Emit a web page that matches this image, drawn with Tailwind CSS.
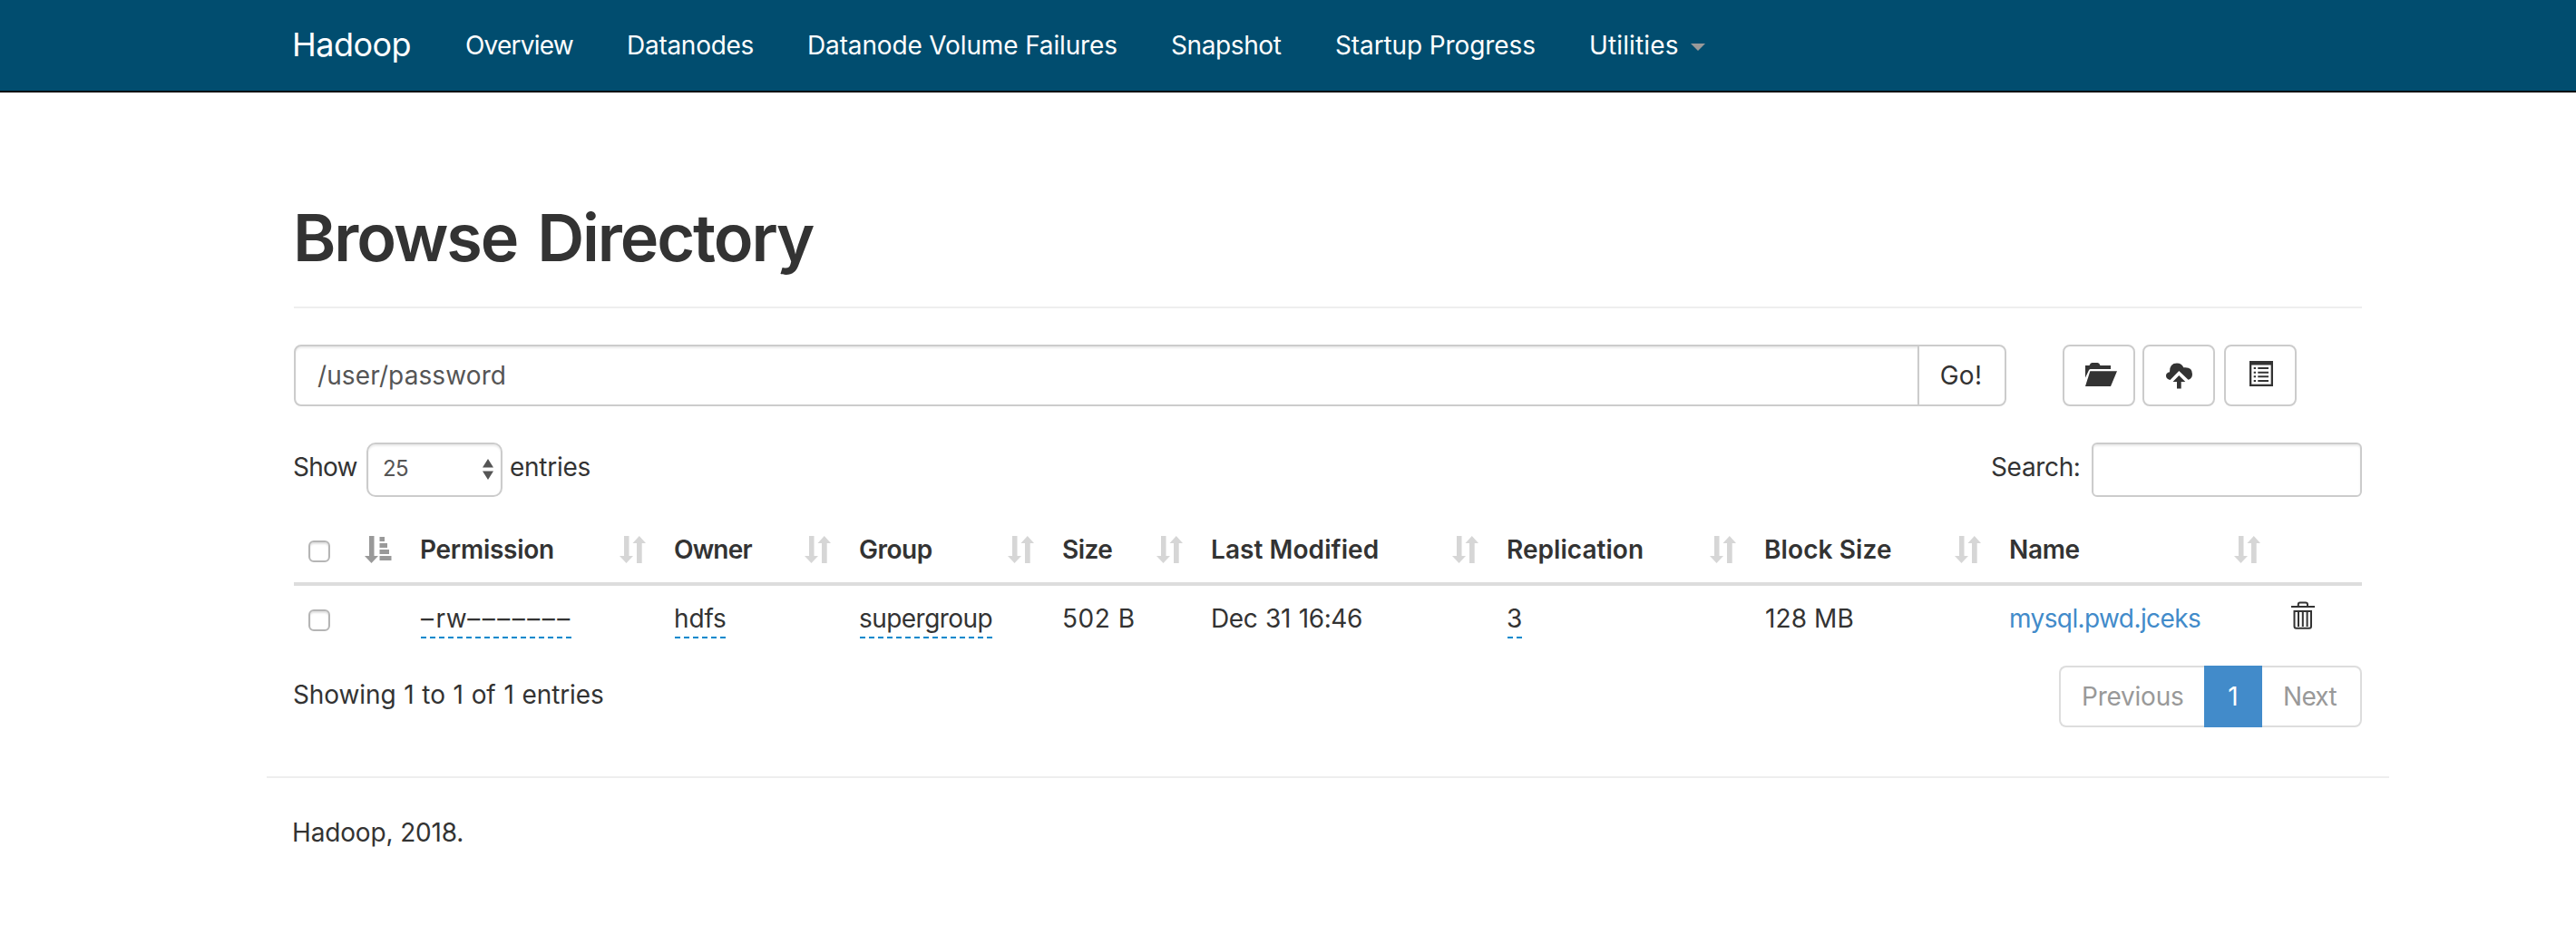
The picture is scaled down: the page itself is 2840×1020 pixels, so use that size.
<!DOCTYPE html>
<html lang="en">
<head>
    <meta charset="UTF-8">
    <meta name="viewport" content="width=device-width, initial-scale=1.0">
    <title>Browsing HDFS</title>
    <script src="https://cdn.jsdelivr.net/npm/@tailwindcss/browser@4"></script>
</head>
<body class="bg-white font-['Inter',sans-serif] text-[28px] leading-10 text-[#333]">
    <svg class="hidden">
        <symbol id="sort" viewBox="0 0 29 30">
            <path d="M5 0h5.5v22H15L7.5 30 0 22h5zM21.8 0 29 8h-4.3v22H19V8h-4.5z" fill="currentColor"/>
        </symbol>
    </svg>

    <header class="h-[102px] border-b-2 border-[#080808] bg-[#014d6f] pl-[322px] text-white">
        <nav class="flex h-[100px] items-center whitespace-nowrap">
            <a class="w-[191px] pb-0.5 text-[36px] tracking-[-0.52px]">Hadoop</a>
            <a class="w-[178px] tracking-[-0.79px]">Overview</a>
            <a class="w-[199px] tracking-[-0.27px]">Datanodes</a>
            <a class="w-[401px] tracking-[-0.14px]">Datanode Volume Failures</a>
            <a class="w-[181px] tracking-[-0.39px]">Snapshot</a>
            <a class="w-[280px] tracking-[-0.11px]">Startup Progress</a>
            <a class="flex items-center gap-[13px] tracking-[0.14px]">Utilities
                <svg class="mt-1 h-2 w-4 text-[#999]" viewBox="0 0 16 8"><path d="M0 0h16L8 8z" fill="currentColor"/></svg>
            </a>
        </nav>
    </header>

    <main class="ml-[294px] w-[2340px]">
        <div class="px-[30px]">
            <h1 class="mt-[120px] border-b-2 border-[#eee] pb-9 text-[72px] leading-[80px] font-semibold tracking-[-2.1px] [word-spacing:6px]"><span class="-ml-px">Browse Directory</span></h1>

            <div class="mt-10 flex h-[68px]">
                <div class="flex w-[1888px] rounded-lg border-2 border-[#ccc]">
                    <div class="flex flex-1 items-center rounded-l-md pl-6 tracking-[0.11px] text-[#555] shadow-[inset_0_2px_2px_rgba(0,0,0,0.075)]">/user/password</div>
                    <button class="w-[96px] border-l-2 border-[#ccc] pr-0.5 tracking-[0.31px]">Go!</button>
                </div>
                <button class="ml-[62px] flex w-20 items-start rounded-lg border-2 border-[#ccc] pt-[18px] pl-[23px]">
                    <svg class="h-[26px] w-9" viewBox="0 0 36 26" fill="#333">
                        <path d="M0 3h4.500Q5.500 0 7.500 0h6q2 0 3 3H28v4H5.500Q4.300 7 3.800 8.500L0 16.500z"/>
                        <path d="M5.300 9.300H35L28 26H0z"/>
                    </svg>
                </button>
                <button class="ml-2 flex w-20 items-start rounded-lg border-2 border-[#ccc] pt-[18px] pl-6">
                    <svg class="h-[29px] w-[29px]" viewBox="0 0 29 29" fill="#333">
                        <path d="M4.500 19Q0 18 0 14.300 0 11 4 10.200 3.800.500 12 .500 17.500.500 19.300 5.300 29 4.300 29 12.500 29 17.500 24.500 18.800L14.300 9z"/>
                        <path d="M14.300 14 21.300 21H16.700V28.500H12V21H7.500z"/>
                    </svg>
                </button>
                <button class="ml-2.5 flex w-20 items-start rounded-lg border-2 border-[#ccc] pt-4 pl-[26px]">
                    <svg class="h-7 w-[26px]" viewBox="0 0 26 28">
                        <path d="M0 0h26v28H0z" fill="#333"/>
                        <path d="M2.300 4.500h21.400v21.200H2.300z" fill="#fff"/>
                        <path d="M4.700 7H7v2H4.700zM9.300 7H21v2H9.300zM4.700 11.700H7v2H4.700zM9.300 11.700H21v2H9.300zM4.700 16.300H7v2H4.700zM9.300 16.300H21v2H9.300zM4.700 21H7v2H4.700zM9.300 21H21v2H9.300z" fill="#333"/>
                    </svg>
                </button>
            </div>

            <div class="mt-10 flex h-[60px]">
                <label class="-ml-px flex items-center">
                    <span class="w-[81px] pb-1.5 tracking-[-0.77px]">Show</span>
                    <span class="flex h-[60px] w-[150px] items-center justify-between rounded-[10px] border-2 border-[#ccc] pr-2 pb-0.5 pl-4 text-2xl tracking-[-0.64px] text-[#555] shadow-[inset_0_2px_2px_rgba(0,0,0,0.075)]">25
                        <svg class="h-[23px] w-3" viewBox="0 0 12 23" fill="#555"><path d="M6 0l6 9.500H0zM0 13.500h12L6 23z"/></svg>
                    </span>
                    <span class="ml-2 pb-1.5 tracking-[-0.27px]">entries</span>
                </label>
                <label class="ml-auto flex items-center">
                    <span class="w-[111px] pb-1.5 tracking-[-0.34px]">Search:</span>
                    <input type="text" class="h-[60px] w-[298px] rounded-md border-2 border-[#ccc] shadow-[inset_0_2px_2px_rgba(0,0,0,0.075)]">
                </label>
            </div>

            <table class="mt-3 w-[2280px] table-fixed border-separate border-spacing-0 text-left whitespace-nowrap">
                <colgroup>
                    <col class="w-[124px]"><col class="w-[280px]"><col class="w-[204px]"><col class="w-[224px]"><col class="w-[164px]">
                    <col class="w-[326px]"><col class="w-[284px]"><col class="w-[270px]"><col class="w-[308px]"><col class="w-[96px]">
                </colgroup>
                <thead class="[&_th]:h-[86px] [&_th]:border-b-4 [&_th]:border-[#ddd] [&_th]:pt-[26px] [&_th]:pr-4 [&_th]:pl-[15px] [&_th]:align-top [&_th]:font-semibold">
                    <tr>
                        <th>
                            <div class="flex justify-between">
                                <span class="mt-2.5 ml-px size-6 rounded-md border-2 border-[#b5b5b5] shadow-[inset_0_2px_2px_rgba(0,0,0,0.12)]"></span>
                                <svg class="mt-[5px] h-[30px] w-[30px] text-[#999]" viewBox="0 0 30 30">
                                    <path d="M5 0h5.500v22H15L7.500 30 0 22h5zM16.500 1H22v5h-5.500zM16.500 8h8.500v5h-8.500zM16.500 15h10.500v5H16.500zM16.500 22H29.500v5h-13z" fill="currentColor"/>
                                </svg>
                            </div>
                        </th>
                        <th><div class="flex justify-between tracking-[-0.28px]">Permission<svg class="mt-[5px] h-[30px] w-[29px] text-[#d6d6d6]"><use href="#sort"/></svg></div></th>
                        <th><div class="flex justify-between tracking-[-0.83px]">Owner<svg class="mt-[5px] h-[30px] w-[29px] text-[#d6d6d6]"><use href="#sort"/></svg></div></th>
                        <th><div class="flex justify-between tracking-[-0.47px]">Group<svg class="mt-[5px] h-[30px] w-[29px] text-[#d6d6d6]"><use href="#sort"/></svg></div></th>
                        <th><div class="flex justify-between tracking-[-0.53px]">Size<svg class="mt-[5px] h-[30px] w-[29px] text-[#d6d6d6]"><use href="#sort"/></svg></div></th>
                        <th><div class="flex justify-between tracking-[0.07px]">Last Modified<svg class="mt-[5px] h-[30px] w-[29px] text-[#d6d6d6]"><use href="#sort"/></svg></div></th>
                        <th><div class="flex justify-between tracking-[0.04px]">Replication<svg class="mt-[5px] h-[30px] w-[29px] text-[#d6d6d6]"><use href="#sort"/></svg></div></th>
                        <th><div class="flex justify-between tracking-[0.1px]">Block Size<svg class="mt-[5px] h-[30px] w-[29px] text-[#d6d6d6]"><use href="#sort"/></svg></div></th>
                        <th><div class="flex justify-between tracking-[-0.35px]">Name<svg class="mt-[5px] h-[30px] w-[29px] text-[#d6d6d6]"><use href="#sort"/></svg></div></th>
                        <th></th>
                    </tr>
                </thead>
                <tbody class="[&_td]:h-[72px] [&_td]:pt-4 [&_td]:pl-4 [&_td]:align-top">
                    <tr>
                        <td><span class="mt-2.5 block size-6 rounded-md border-2 border-[#b5b5b5] shadow-[inset_0_2px_2px_rgba(0,0,0,0.12)]"></span></td>
                        <td><span class="block w-[166px] border-b-2 border-dashed border-[#08c] tracking-[2.5px]">–<span class="tracking-[0.5px]">rw</span>–––––––</span></td>
                        <td><span class="block w-14 border-b-2 border-dashed border-[#08c] -indent-px tracking-[-0.15px]">hdfs</span></td>
                        <td><span class="block w-[146px] border-b-2 border-dashed border-[#08c] -indent-px tracking-[-0.55px]">supergroup</span></td>
                        <td><span class="-ml-px tracking-[0.52px]">502 B</span></td>
                        <td><span class="-ml-px tracking-[-0.45px] [word-spacing:1.5px]">Dec 31 16:46</span></td>
                        <td><span class="block w-4 border-b-2 border-dashed border-[#08c] -indent-px">3</span></td>
                        <td><span class="tracking-[0.09px]">128 MB</span></td>
                        <td><a class="-ml-px tracking-[-0.6px] text-[#428bca]">mysql.pwd.jceks</a></td>
                        <td>
                            <svg class="mt-px ml-0.5 h-[31px] w-[26px]" viewBox="0 0 26 31" fill="none" stroke="#333" stroke-width="2">
                                <path d="M0 6h26M7.800 6V3.500Q7.800 1.500 9.800 1.500h6Q18 1.500 18 3.500V6M8 11v17M12.800 11v17M17.600 11v17"/>
                                <path d="M3.500 11h18.500v16.500q0 2.200-2 2.200H5.500q-2 0-2-2.200z"/>
                            </svg>
                        </td>
                    </tr>
                </tbody>
            </table>

            <div class="mt-4 flex justify-between">
                <div class="-ml-px pt-3 tracking-[-0.1px] [word-spacing:1px]">Showing 1 to 1 of 1 entries</div>
                <div class="flex h-[68px] w-[334px] leading-[64px] text-[#999]">
                    <a class="w-40 rounded-l-lg border-2 border-r-0 border-[#ddd] pl-[23px] tracking-[-0.23px]">Previous</a>
                    <a class="w-16 bg-[#428bca] text-center leading-[68px] text-white">1</a>
                    <a class="w-[110px] rounded-r-lg border-2 border-l-0 border-[#ddd] pl-[23px] tracking-[-0.71px]">Next</a>
                </div>
            </div>
        </div>

        <footer class="mt-[54px] border-t-2 border-[#eee] px-7 pt-10">
            <p class="tracking-[-0.15px]">Hadoop, 2018.</p>
        </footer>
    </main>
</body>
</html>
